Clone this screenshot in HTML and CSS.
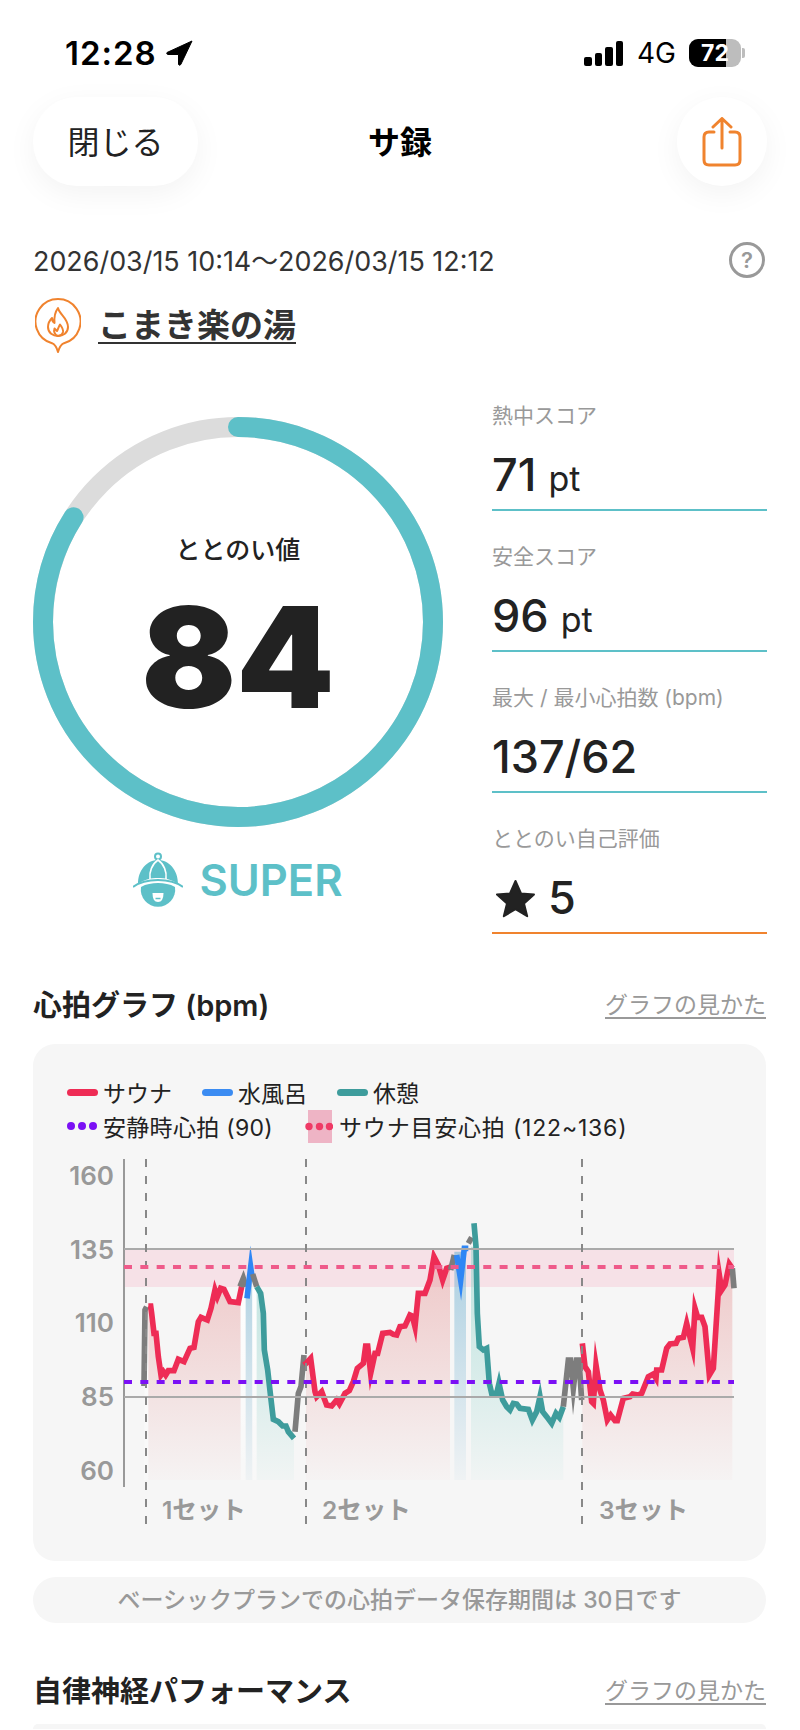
FILE: index.html
```html
<!DOCTYPE html>
<html lang="ja">

<head>
    <meta charset="UTF-8">
    <meta name="viewport" content="width=device-width, initial-scale=1.0">
    <title>サ録</title>
    <link rel="stylesheet" href="styles.css">
</head>

<body>
    <!-- Status bar -->
    <div class="status">
        <div class="status-left">
            <span class="clock">12:28</span>
            <svg class="arrow-icon" viewBox="0 0 27 26" width="27" height="26">
                <path d="M26 1 L1 12.5 Q0 14 2 14.5 L12.5 14.5 L12.5 24.5 Q13.5 26 14.8 24.5 Z" fill="#000" stroke="#000" stroke-width="1" stroke-linejoin="round" />
            </svg>
        </div>
        <div class="status-right">
            <div class="signal">
                <span class="bar bar-1"></span>
                <span class="bar bar-2"></span>
                <span class="bar bar-3"></span>
                <span class="bar bar-4"></span>
            </div>
            <span class="network">4G</span>
            <div class="battery">
                <div class="battery-body">
                    <div class="battery-fill"></div>
                    <span class="battery-text">72</span>
                </div>
                <span class="battery-nub"></span>
            </div>
        </div>
    </div>

    <!-- Top bar -->
    <div class="nav">
        <button type="button" class="close-btn">閉じる</button>
        <div class="nav-title">サ録</div>
        <button type="button" class="share-btn">
            <svg viewBox="0 0 40 50" width="40" height="50" fill="none" stroke="#f0832e" stroke-width="3" stroke-linecap="round" stroke-linejoin="round">
                <path d="M12 15 H7 Q2 15 2 20 V43 Q2 48 7 48 H33 Q38 48 38 43 V20 Q38 15 33 15 H28" />
                <path d="M20 31 V2 M11 10 L20 1.5 L29 10" />
            </svg>
        </button>
    </div>

    <div class="date-row">
        <span class="date-text">2026/03/15 10:14～2026/03/15 12:12</span>
        <span class="help">?</span>
    </div>

    <div class="place-row">
        <svg class="pin-icon" viewBox="0 0 46 55" width="46" height="55" fill="none" stroke="#f0832e" stroke-width="2" stroke-linejoin="round" stroke-linecap="round">
            <path d="M17 45.2 A22.5 22.5 0 1 1 29 45.2 Q25 47 23 54 Q21 47 17 45.2 Z" />
            <path d="M23 10 C24 16 33 20 33 29 C33 35 28 38 23 38 C18 38 13 35 13 29 C13 25 15 22 17 20 C17 23 18 24 19.5 25 C19 19 20 14 23 10 Z" />
            <path d="M23 38 C19.5 37 18.5 33 19.5 30.5 L22 33 C23 31 24 28 25 26.5 C27 29 28.5 31 28 34 C27.5 36 26 37.5 23 38" />
        </svg>
        <a class="place-name">こまき楽の湯</a>
    </div>

    <!-- Score summary -->
    <div class="summary">
        <div class="summary-left">
            <div class="ring">
                <svg viewBox="0 0 410 410" width="410" height="410" fill="none" stroke-width="20">
                    <circle cx="205" cy="205" r="195" stroke="#dcdcdc" />
                    <circle cx="205" cy="205" r="195" stroke="#5dc0c8" stroke-linecap="round" stroke-dasharray="1029.2 1225.2" transform="rotate(-90 205 205)" />
                </svg>
                <div class="ring-text">
                    <div class="ring-label">ととのい値</div>
                    <div class="ring-value">84</div>
                </div>
            </div>
            <div class="rank">
                <svg viewBox="0 0 50 56" width="50" height="56">
                    <circle cx="25" cy="4.5" r="3" fill="none" stroke="#5dc0c8" stroke-width="2" />
                    <path d="M5 32 C5 18 14 8 25 8 C36 8 45 18 45 32 C38 27 32 26 25 26 C18 26 12 27 5 32 Z" fill="#5dc0c8" />
                    <path d="M17 27 C16 20 19 12 25 8 C31 12 34 20 33 27" fill="none" stroke="#fff" stroke-width="1.6" />
                    <path d="M0 35 C8 29 17 28 25 28 C33 28 42 29 50 35" fill="none" stroke="#5dc0c8" stroke-width="2" />
                    <path d="M8 35 C13 32 19 31 25 31 C31 31 37 32 42 35 A17.2 17.2 0 1 1 8 35 Z" fill="#5dc0c8" />
                    <path d="M19.5 41 H30.5 Q30.5 50 25 50 Q19.5 50 19.5 41 Z" fill="#fff" />
                    <path d="M22.5 46.5 H27.5" stroke="#5dc0c8" stroke-width="1.5" />
                </svg>
                <span class="rank-text">SUPER</span>
            </div>
        </div>
        <div class="summary-right">
            <div class="stat">
                <div class="stat-label">熱中スコア</div>
                <div class="stat-value">71 <small>pt</small></div>
            </div>
            <div class="stat">
                <div class="stat-label">安全スコア</div>
                <div class="stat-value">96 <small>pt</small></div>
            </div>
            <div class="stat">
                <div class="stat-label">最大 / 最小心拍数 (bpm)</div>
                <div class="stat-value">137/62</div>
            </div>
            <div class="stat stat-orange">
                <div class="stat-label">ととのい自己評価</div>
                <div class="stat-value stat-star">
                    <svg viewBox="0 0 41 39" width="41" height="39">
                        <path d="M20.5 2 L26 14.5 L39 15.5 L29 24.5 L32.2 37.2 L20.5 30.2 L8.8 37.2 L12 24.5 L2 15.5 L15 14.5 Z" fill="#222" stroke="#222" stroke-width="2" stroke-linejoin="round" />
                    </svg>
                    5
                </div>
            </div>
        </div>
    </div>

    <!-- Heart rate graph -->
    <div class="section-head section-heart">
        <h2>心拍グラフ (bpm)</h2>
        <a class="guide-link">グラフの見かた</a>
    </div>

    <div class="card">
        <div class="legend">
            <div class="legend-row">
                <span class="line line-red"></span><span class="legend-text legend-gap">サウナ</span>
                <span class="line line-blue"></span><span class="legend-text legend-gap">水風呂</span>
                <span class="line line-teal"></span><span class="legend-text">休憩</span>
            </div>
            <div class="legend-row">
                <svg class="swatch" viewBox="0 0 30 8" width="30" height="8" fill="#7b10f5">
                    <circle cx="4" cy="4" r="4" /><circle cx="15" cy="4" r="4" /><circle cx="26" cy="4" r="4" />
                </svg>
                <span class="legend-text legend-rest">安静時心拍 (90)</span>
                <svg class="swatch" viewBox="0 0 28 33" width="28" height="33">
                    <rect x="3" width="24" height="33" fill="#eeb4c5" />
                    <g fill="#ef3a66"><circle cx="4" cy="16.5" r="3.7" /><circle cx="14.5" cy="16.5" r="3.7" /><circle cx="24.5" cy="16.5" r="3.7" /></g>
                </svg>
                <span class="legend-text legend-target">サウナ目安心拍 (122~136)</span>
            </div>
        </div>

        <!-- viewBox uses page coordinates so the curve points stay readable -->
        <svg class="chart" viewBox="33 1150 733 400" width="733" height="400">
            <defs>
                <linearGradient id="fillRed" gradientUnits="userSpaceOnUse" x1="0" y1="150" x2="0" y2="900">
                    <stop offset="0" stop-color="#e58f8f" stop-opacity="0.5" />
                    <stop offset="1" stop-color="#e58f8f" stop-opacity="0.03" />
                </linearGradient>
                <linearGradient id="fillBlue" gradientUnits="userSpaceOnUse" x1="0" y1="150" x2="0" y2="900">
                    <stop offset="0" stop-color="#6fb0d0" stop-opacity="0.6" />
                    <stop offset="1" stop-color="#6fb0d0" stop-opacity="0.05" />
                </linearGradient>
                <linearGradient id="fillTeal" gradientUnits="userSpaceOnUse" x1="0" y1="300" x2="0" y2="900">
                    <stop offset="0" stop-color="#8fd4cc" stop-opacity="0.5" />
                    <stop offset="1" stop-color="#8fd4cc" stop-opacity="0.05" />
                </linearGradient>
                <linearGradient id="fillWhite" gradientUnits="userSpaceOnUse" x1="0" y1="300" x2="0" y2="900">
                    <stop offset="0" stop-color="#fff" stop-opacity="0.9" />
                    <stop offset="1" stop-color="#fff" stop-opacity="0.2" />
                </linearGradient>
            </defs>

            <!-- target band -->
            <rect x="124" y="1249" width="610" height="38" fill="#f6e1e7" />

            <!-- left half, points read at 3x from x=100 -->
            <g transform="translate(100 1180) scale(0.33333)">
                <polygon fill="url(#fillWhite)" points="135,390 145,378 145,900 132,900" />
                <polygon fill="url(#fillRed)" points="145,378 152,378 155,400 162,460 168,460 175,530 183,585 190,575 197,585 205,572 222,572 235,538 252,545 270,505 282,502 295,425 303,412 322,420 333,385 345,330 352,350 362,325 372,328 390,365 415,368 422,330 422,900 145,900" />
                <polygon fill="url(#fillWhite)" points="422,330 437,330 437,900 422,900" />
                <polygon fill="url(#fillBlue)" points="437,300 457,300 457,900 437,900" />
                <polygon fill="url(#fillWhite)" points="457,300 470,320 470,900 457,900" />
                <polygon fill="url(#fillTeal)" points="470,320 482,340 490,400 493,510 503,570 512,650 520,718 535,725 548,738 558,738 565,755 582,775 582,900 470,900" />
                <polygon fill="url(#fillRed)" points="618,550 632,535 645,635 650,650 665,635 680,675 695,678 710,660 718,672 735,640 748,632 760,605 772,565 790,550 797,498 803,498 812,580 825,520 833,520 848,460 870,457 880,463 890,465 900,440 915,438 930,405 937,408 945,440 955,340 975,340 990,300 1002,230 1015,255 1028,300 1040,265 1050,262 1050,900 618,900" />

                <g fill="none" stroke-width="17" stroke-miterlimit="10">
                    <polyline stroke="#7d7d7d" points="132,618 135,390 140,380" />
                    <polyline stroke="#ee2c55" points="145,378 152,378 155,400 162,460 168,460 175,530 183,585 190,575 197,585 205,572 222,572 235,538 252,545 270,505 282,502 295,425 303,412 322,420 333,385 345,330 352,350 362,325 372,328 390,365 415,368 425,320" />
                    <polyline stroke="#7d7d7d" points="420,320 430,295 438,320" />
                    <polyline stroke="#2f86f5" points="441,355 452,262 456,290" />
                    <polyline stroke="#7d7d7d" points="458,282 470,320" />
                    <polyline stroke="#3e9c9c" points="470,320 482,340 490,400 493,510 503,570 512,650 520,718 535,725 548,738 558,738 565,755 582,775" />
                    <polyline stroke="#7d7d7d" points="585,755 595,640 603,620 612,525" />
                    <polyline stroke="#ee2c55" points="612,555 618,550 632,535 645,635 650,650 665,635 680,675 695,678 710,660 718,672 735,640 748,632 760,605 772,565 790,550 797,498 803,498 812,580 825,520 833,520 848,460 870,457 880,463 890,465 900,440 915,438 930,405 937,408 945,440 955,340 975,340 990,300 1002,230 1015,255 1028,300 1040,265 1050,262" />
                </g>
            </g>

            <!-- right half, points read at 3x from x=400 -->
            <g transform="translate(400 1180) scale(0.33333)">
                <polygon fill="url(#fillBlue)" points="163,215 198,215 198,900 163,900" />
                <polygon fill="url(#fillTeal)" points="213,200 228,200 232,400 238,500 250,510 260,505 268,610 275,640 290,640 297,610 308,660 320,680 330,690 340,670 350,672 360,685 385,688 397,720 410,695 420,650 428,695 440,710 455,730 468,700 478,712 490,680 490,900 213,900" />
                <polygon fill="url(#fillRed)" points="547,490 555,560 565,575 575,665 580,670 588,555 600,630 610,660 622,720 632,705 645,722 652,722 670,655 690,650 698,642 715,645 725,640 745,590 760,582 768,595 770,570 785,570 800,505 810,492 828,490 835,475 850,472 860,430 878,505 885,385 893,412 905,412 915,440 928,585 940,565 958,285 965,330 975,315 988,252 997,265 997,900 547,900" />

                <g fill="none" stroke-width="17" stroke-miterlimit="10">
                    <polyline stroke="#7d7d7d" points="152,270 163,225" />
                    <polyline stroke="#2f86f5" points="170,225 182,300 193,205 205,205" />
                    <polyline stroke="#7d7d7d" points="205,190 215,172" />
                    <polyline stroke="#3e9c9c" points="222,130 228,200 232,400 238,500 250,510 260,505 268,610 275,640 290,640 297,610 308,660 320,680 330,690 340,670 350,672 360,685 385,688 397,720 410,695 420,650 428,695 440,710 455,730 468,700 478,712 490,680" />
                    <polyline stroke="#7d7d7d" points="490,680 505,540 512,540 520,625 530,540 537,540 545,660" />
                    <polyline stroke="#ee2c55" points="547,490 555,560 565,575 575,665 580,670 588,555 600,630 610,660 622,720 632,705 645,722 652,722 670,655 690,650 698,642 715,645 725,640 745,590 760,582 768,595 770,570 785,570 800,505 810,492 828,490 835,475 850,472 860,430 878,505 885,385 893,412 905,412 915,440 928,585 940,565 958,285 965,330 975,315 988,252 997,265" />
                    <polyline stroke="#7d7d7d" points="997,265 1002,325" />
                </g>
            </g>

            <!-- axis and guide lines -->
            <line x1="124" y1="1159" x2="124" y2="1487" stroke="#999" stroke-width="2" />
            <line x1="124" y1="1249" x2="734" y2="1249" stroke="#aaa" stroke-width="2" />
            <line x1="124" y1="1397" x2="734" y2="1397" stroke="#aaa" stroke-width="2" />
            <g stroke="#888" stroke-width="2" stroke-dasharray="8 9">
                <line x1="146" y1="1159" x2="146" y2="1530" />
                <line x1="306" y1="1159" x2="306" y2="1530" />
                <line x1="582" y1="1159" x2="582" y2="1530" />
            </g>
            <line x1="124" y1="1267" x2="734" y2="1267" stroke="#ef5a8a" stroke-width="4" stroke-dasharray="8 8.33" />
            <line x1="124" y1="1382" x2="734" y2="1382" stroke="#7b10f5" stroke-width="4" stroke-dasharray="8 8.33" />

            <g class="axis-text" text-anchor="end">
                <text x="114" y="1185">160</text>
                <text x="114" y="1259">135</text>
                <text x="114" y="1332">110</text>
                <text x="114" y="1406">85</text>
                <text x="114" y="1480">60</text>
            </g>
            <g class="set-text">
                <text x="162" y="1519">1セット</text>
                <text x="322" y="1519">2セット</text>
                <text x="599" y="1519">3セット</text>
            </g>
        </svg>
    </div>

    <div class="notice">ベーシックプランでの心拍データ保存期間は 30日です</div>

    <div class="section-head section-auto">
        <h2>自律神経パフォーマンス</h2>
        <a class="guide-link">グラフの見かた</a>
    </div>

    <div class="card-next"></div>
</body>

</html>
```

FILE: styles.css
```css
html, body {
    margin: 0;
    padding: 0;
}

body {
    width: 800px;
    height: 1730px;
    overflow: hidden;
    background-color: #ffffff;
    color: #222222;
    font-family: Inter, "Noto Sans CJK JP", sans-serif;
}

/* status bar */
.status {
    display: flex;
    justify-content: space-between;
    align-items: center;
    height: 28px;
    padding: 39px 55px 0 65px;
}

.status-left {
    display: flex;
    align-items: center;
    gap: 9px;
}

.clock {
    color: #000000;
    font-size: 33px;
    font-weight: 600;
    letter-spacing: 1px;
}

.status-right {
    display: flex;
    align-items: center;
}

.signal {
    display: flex;
    align-items: flex-end;
    gap: 3px;
    height: 25px;
    margin-right: 14px;
}

.bar {
    width: 7.5px;
    background-color: #000000;
    border-radius: 2px;
}

.bar-1 { height: 9px; }
.bar-2 { height: 13px; }
.bar-3 { height: 19px; }
.bar-4 { height: 25px; }

.network {
    color: #000000;
    font-size: 28px;
    font-weight: 400;
    margin-right: 13px;
}

.battery {
    display: flex;
    align-items: center;
}

.battery-body {
    position: relative;
    width: 52px;
    height: 28px;
    border-radius: 9px;
    overflow: hidden;
    background-color: #bdbdbd;
    text-align: center;
}

.battery-fill {
    width: 72%;
    height: 100%;
    background-color: #000000;
}

.battery-text {
    position: absolute;
    top: 0;
    left: 0;
    width: 100%;
    color: #ffffff;
    font-size: 23px;
    font-weight: 700;
    line-height: 28px;
}

.battery-nub {
    width: 3px;
    height: 10px;
    margin-left: 1px;
    background-color: #bdbdbd;
    border-radius: 0 2px 2px 0;
}

/* top bar */
.nav {
    display: grid;
    grid-template-columns: 1fr auto 1fr;
    align-items: center;
    margin-top: 30px;
    padding: 0 33px;
}

.close-btn {
    justify-self: start;
    width: 165px;
    height: 89px;
    padding: 0 0 4px;
    border: none;
    border-radius: 44px;
    background-color: #ffffff;
    box-shadow: 0 8px 30px rgba(0, 0, 0, 0.05);
    color: #222222;
    font-family: inherit;
    font-size: 32px;
}

.nav-title {
    padding-bottom: 4px;
    color: #000000;
    font-size: 32px;
    font-weight: 700;
}

.share-btn {
    display: flex;
    align-items: center;
    justify-content: center;
    justify-self: end;
    width: 90px;
    height: 89px;
    padding: 0;
    border: none;
    border-radius: 50%;
    background-color: #ffffff;
    box-shadow: 0 8px 30px rgba(0, 0, 0, 0.05);
}

.date-row {
    display: flex;
    justify-content: space-between;
    align-items: center;
    margin-top: 54px;
    padding: 0 35px 0 33px;
}

.date-text {
    color: #333333;
    font-size: 26.9px;
}

.help {
    width: 30px;
    height: 30px;
    border: 3px solid #999999;
    border-radius: 50%;
    color: #999999;
    font-size: 22px;
    font-weight: 600;
    line-height: 30px;
    text-align: center;
}

.place-row {
    display: flex;
    align-items: center;
    gap: 17px;
    margin-top: 19px;
    padding-left: 35px;
}

.place-name {
    margin-bottom: 2px;
    color: #333333;
    font-size: 33px;
    font-weight: 600;
    line-height: 44px;
    text-decoration: underline;
    text-underline-offset: 5px;
    text-decoration-thickness: 2px;
}

/* score summary */
.summary {
    display: flex;
    justify-content: space-between;
    margin-top: 49px;
    padding: 0 33px;
}

.summary-left {
    width: 410px;
    padding-top: 15px;
}

.ring {
    position: relative;
    height: 410px;
}

.ring-text {
    position: absolute;
    top: 0;
    left: 0;
    width: 100%;
    padding-top: 116px;
    text-align: center;
}

.ring-label {
    font-size: 25px;
    font-weight: 500;
    line-height: 34px;
}

.ring-value {
    margin-top: 18px;
    font-size: 140px;
    font-weight: 900;
    line-height: 145px;
}

.rank {
    display: flex;
    align-items: center;
    justify-content: center;
    gap: 16px;
    margin-top: 25px;
}

.rank-text {
    color: #5dc0c8;
    font-size: 43.5px;
    font-weight: 600;
}

.summary-right {
    display: flex;
    flex-direction: column;
    gap: 32px;
    width: 275px;
}

.stat {
    padding-bottom: 9px;
    border-bottom: 2px solid #5dc0c8;
}

.stat-orange {
    border-bottom-color: #f0832e;
}

.stat-label {
    color: #999999;
    font-size: 21px;
    line-height: 28px;
}

.stat-value {
    margin-top: 20px;
    font-size: 45px;
    font-weight: 530;
    line-height: 50px;
}

.stat-value small {
    font-size: 34px;
    font-weight: 400;
    line-height: 1;
}

.stat-star {
    display: flex;
    align-items: center;
    gap: 12px;
    padding-left: 3px;
}

/* sections */
.section-head {
    display: flex;
    justify-content: space-between;
    align-items: center;
    height: 36px;
    padding: 0 34px 0 33px;
}

.section-head h2 {
    margin: 0;
    font-size: 29px;
    font-weight: 600;
}

.section-heart {
    margin-top: 51px;
}

.section-auto {
    margin-top: 48px;
}

.guide-link {
    color: #999999;
    font-size: 23px;
    text-decoration: underline;
    text-underline-offset: 4px;
}

.card {
    margin: 23px 34px 0 33px;
    padding: 31px 0 11px;
    border-radius: 22px;
    background-color: #f6f6f6;
}

.legend {
    padding-left: 34px;
}

.legend-row {
    display: flex;
    align-items: center;
    height: 34px;
}

.line {
    width: 31px;
    height: 7px;
    margin-right: 5px;
    border-radius: 4px;
}

.line-red { background-color: #ee2c55; }
.line-blue { background-color: #3b8cf2; }
.line-teal { background-color: #3e9c9c; }

.swatch {
    margin-right: 6px;
}

.legend-text {
    color: #222222;
    font-size: 23px;
}

.legend-gap {
    margin-right: 30px;
}

.legend-rest {
    margin-right: 32px;
    letter-spacing: 0.3px;
}

.legend-target {
    letter-spacing: 0.8px;
}

.chart {
    display: block;
    margin-top: 7px;
}

.axis-text text {
    fill: #999999;
    font-size: 26px;
    font-weight: 600;
}

.set-text text {
    fill: #999999;
    font-size: 24.5px;
    font-weight: 600;
}

.notice {
    height: 46px;
    margin: 16px 34px 0 33px;
    border-radius: 23px;
    background-color: #f6f6f6;
    color: #999999;
    font-size: 23px;
    font-weight: 500;
    line-height: 46px;
    text-align: center;
}

.card-next {
    height: 5px;
    margin: 17px 34px 0 33px;
    border-radius: 22px 22px 0 0;
    background-color: #f6f6f6;
}
```
